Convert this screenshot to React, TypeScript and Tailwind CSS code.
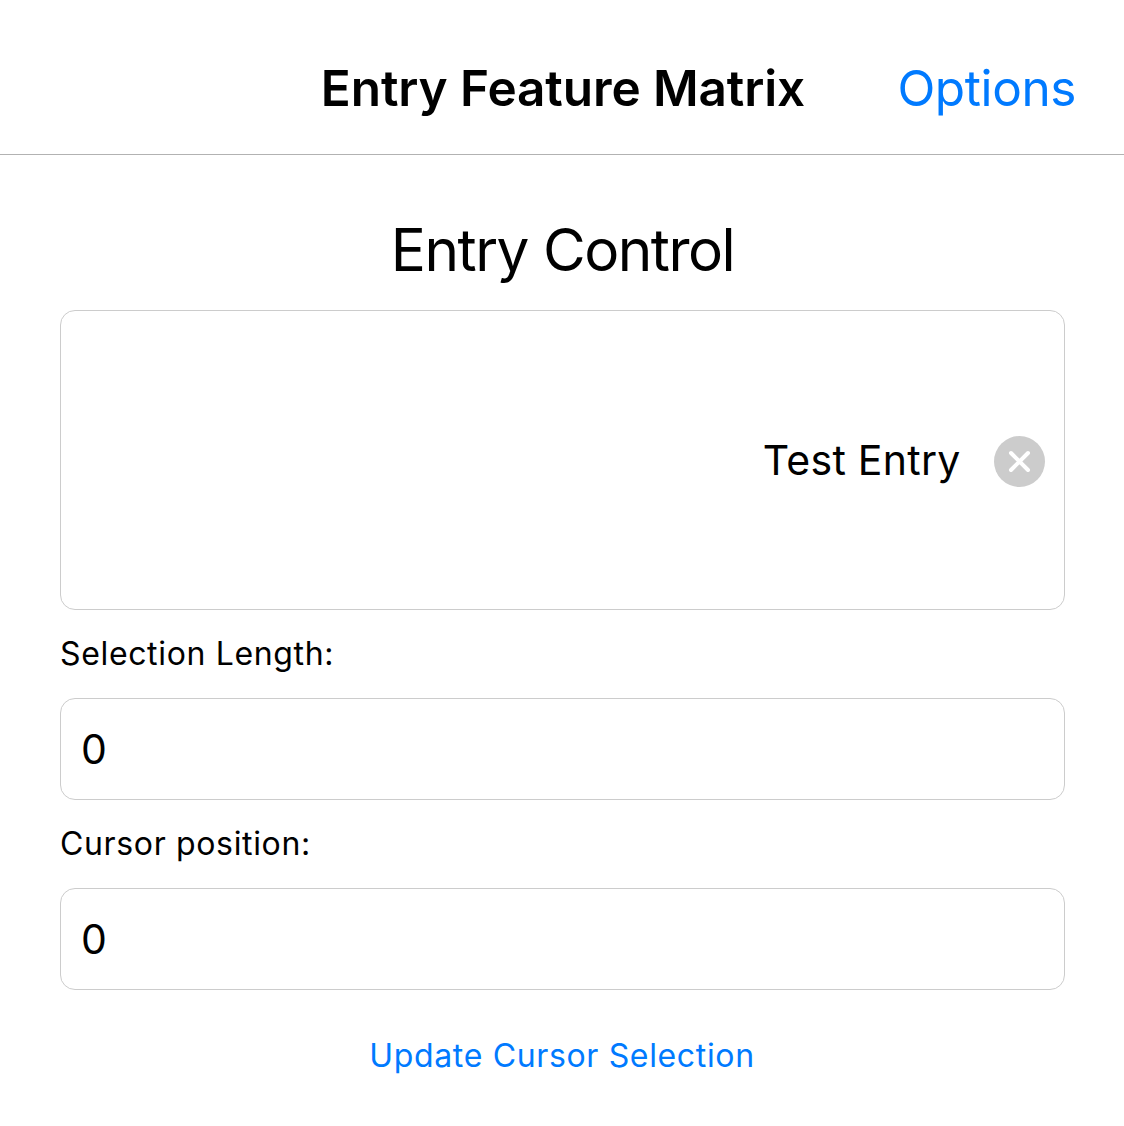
const field = "flex items-center rounded-[15px] border border-[#cccccc] bg-white";

export default function App() {
  return (
    <div className="h-[1126px] w-full overflow-hidden bg-white font-['Inter',sans-serif] text-black">
      <header className="grid h-[155px] grid-cols-[1fr_auto_1fr] items-end border-b border-[#b2b2b2] pb-[35px]">
        <span />
        <h1 className="pl-[2px] text-[49.5px] leading-[62px] font-semibold tracking-[-0.1px] whitespace-nowrap">Entry Feature Matrix</h1>
        <button className="mr-[48px] justify-self-end text-[49.5px] leading-[62px] tracking-[-0.4px] text-[#007aff]">Options</button>
      </header>
      <main className="flex flex-col pt-[59px] pr-[59px] pl-[60px]">
        <h2 className="text-center text-[58.5px] leading-[72px] tracking-[-1.5px]">Entry Control</h2>
        <div className={field + " mt-[24px] h-[300px] justify-end pr-[18px]"}>
          <span className="text-[41px] leading-[50px] tracking-[0.25px]">Test Entry</span>
          <svg className="mt-[4px] ml-[33.5px] size-[52px]" viewBox="0 0 52 52" fill="none">
            <circle cx="25.5" cy="25.5" r="25.5" fill="#cccccc" />
            <path d="M17 17L34 34M34 17L17 34" stroke="white" strokeWidth="4" strokeLinecap="round" />
          </svg>
        </div>
        <label className="mt-[24px] text-[32px] leading-[40px] tracking-[0.65px]">Selection Length:</label>
        <div className={field + " mt-[24px] h-[102px] px-[20px] pt-[2px] text-[41px]"}>0</div>
        <label className="mt-[24px] text-[32px] leading-[40px] tracking-[0.65px]">Cursor position:</label>
        <div className={field + " mt-[24px] h-[102px] px-[20px] pt-[2px] text-[41px]"}>0</div>
        <button className="mt-[46px] self-center pr-px text-[32px] leading-[40px] tracking-[0.65px] text-[#007aff]">Update Cursor Selection</button>
      </main>
    </div>
  );
}
